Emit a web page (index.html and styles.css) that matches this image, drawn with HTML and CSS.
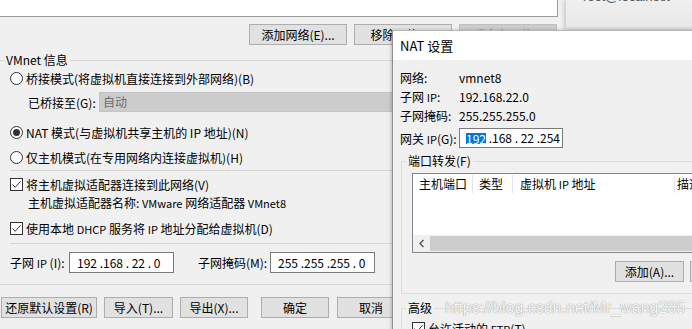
FILE: index.html
```html
<!DOCTYPE html>
<html>
<head>
<meta charset="utf-8">
<link rel="stylesheet" href="styles.css">
</head>
<body>
<div class="screen">
  <div class="main">
    <div class="netlist"></div>
    <div class="netbtns">
      <div class="btn w98">添加网络(E)...</div>
      <div class="btn w98">移除网络(O)</div>
      <div class="btn w98 disabled">重命名网络...</div>
    </div>
    <div class="ghead"><span class="gline lead"></span><span class="glabel">VMnet 信息</span><span class="gline fill"></span></div>
    <div class="row"><span class="radio"></span><span>桥接模式(将虚拟机直接连接到外部网络)(B)</span></div>
    <div class="bridge"><span class="blabel">已桥接至(G):</span><div class="combo">自动</div></div>
    <div class="row r2"><span class="radio on"></span><span>NAT 模式(与虚拟机共享主机的 IP 地址)(N)</span></div>
    <div class="row r3"><span class="radio"></span><span>仅主机模式(在专用网络内连接虚拟机)(H)</span></div>
    <div class="sep s1"></div>
    <div class="row c1"><span class="check"><svg width="11" height="11" viewBox="0 0 11 11"><path d="M1.5 5.5 L4.2 8.3 L9.6 2.2" fill="none" stroke="#333" stroke-width="1"/></svg></span><span>将主机虚拟适配器连接到此网络(V)</span></div>
    <div class="adapter">主机虚拟适配器名称: <span class="lat">VMware</span> 网络适配器 <span class="lat">VMnet8</span></div>
    <div class="row c2"><span class="check"><svg width="11" height="11" viewBox="0 0 11 11"><path d="M1.5 5.5 L4.2 8.3 L9.6 2.2" fill="none" stroke="#333" stroke-width="1"/></svg></span><span>使用本地 <span class="lat">DHCP</span> 服务将 <span class="lat">IP</span> 地址分配给虚拟机(D)</span></div>
    <div class="sep s2"></div>
    <div class="subnet">
      <span class="sl1">子网 <span class="lat">IP</span> (I):</span>
      <div class="ip ipw">192 .168 . 22 . 0</div>
      <span class="sl2">子网掩码(M):</span>
      <div class="ip ipw">255 .255 .255 . 0</div>
    </div>
    <div class="sep s3"></div>
    <div class="actions">
      <div class="btn a1">还原默认设置(R)</div>
      <div class="btn a2">导入(T)...</div>
      <div class="btn a3">导出(X)...</div>
      <div class="btn a4">确定</div>
      <div class="btn a5">取消</div>
    </div>
  </div>

  <div class="bgwin"><span class="bgtext">root@localhost</span></div>

  <div class="nat">
    <div class="titlebar">NAT 设置</div>
    <div class="natbody">
      <div class="kv"><span class="k">网络:</span><span>vmnet8</span></div>
      <div class="kv"><span class="k">子网 <span class="lat">IP</span>:</span><span>192.168.22.0</span></div>
      <div class="kv"><span class="k">子网掩码:</span><span>255.255.255.0</span></div>
      <div class="kv gw"><span class="k">网关 <span class="lat">IP</span>(G):</span><div class="ip gwip"><span class="sel">192</span> .168 . 22 .254</div></div>
      <fieldset class="fs pf">
        <legend>端口转发(F)</legend>
        <div class="pfin">
          <div class="listview">
            <div class="lvhead">
              <span class="col cw1">主机端口</span>
              <span class="col cw2">类型</span>
              <span class="col cw3">虚拟机 <span class="lat">IP</span> 地址</span>
              <span class="col cw4">描述</span>
            </div>
            <div class="lvbody"></div>
            <div class="hscroll">
              <span class="sarrow"><svg width="8" height="9" viewBox="0 0 8 9"><path d="M5.5 1 L2 4.5 L5.5 8" fill="none" stroke="#555" stroke-width="1.4"/></svg></span>
              <span class="thumb"></span>
            </div>
          </div>
          <div class="pfbtns">
            <div class="btn b69">添加(A)...</div>
            <div class="btn b69">移除(R)</div>
          </div>
        </div>
      </fieldset>
      <fieldset class="fs adv">
        <legend>高级</legend>
        <div class="advin">
          <div class="row ftp"><span class="check"><svg width="11" height="11" viewBox="0 0 11 11"><path d="M1.5 5.5 L4.2 8.3 L9.6 2.2" fill="none" stroke="#333" stroke-width="1"/></svg></span><span>允许活动的 <span class="lat">FTP</span>(T)</span></div>
        </div>
      </fieldset>
    </div>
  </div>

  <div class="watermark">https://blog.csdn.net/Mr_wang285</div>
</div>
</body>
</html>
```

FILE: styles.css
```css
* { box-sizing: border-box; }
html, body { margin: 0; padding: 0; }
body {
  width: 692px;
  height: 329px;
  overflow: hidden;
  background: #f0f0f0;
  font-family: "Noto Sans CJK SC", "Noto Sans", sans-serif;
  font-size: 12px;
  color: #000;
}
.screen { position: relative; width: 692px; height: 329px; overflow: hidden; }
.main { width: 567px; }
.lat { font-size: 11px; }

.netlist {
  height: 17px;
  width: 558px;
  background: #fff;
  border-right: 1px solid #9a9a9a;
  border-bottom: 1px solid #9a9a9a;
}

.btn {
  height: 21px;
  border: 1px solid #adadad;
  background: #e1e1e1;
  display: flex;
  align-items: center;
  justify-content: center;
  line-height: 12px;
  white-space: nowrap;
  flex: none;
}
.btn.disabled { background: #cccccc; border-color: #bfbfbf; color: #838383; }

.netbtns { display: flex; gap: 7px; margin-top: 7px; padding-left: 249px; }
.w98 { width: 98px; }

.ghead { display: flex; align-items: center; height: 16px; margin-top: 7px; }
.gline { height: 1px; background: #d5d5d5; }
.gline.lead { width: 4px; }
.gline.fill { flex: 1; }
.glabel { padding: 0 2px; line-height: 16px; }

.row { display: flex; align-items: center; gap: 3px; height: 20px; padding-left: 10px; }
.radio {
  width: 13px; height: 13px; flex: none;
  border: 1px solid #333; border-radius: 50%; background: #fff;
  display: flex; align-items: center; justify-content: center;
}
.radio.on::after { content: ""; width: 7px; height: 7px; border-radius: 50%; background: #333; }
.check {
  width: 13px; height: 13px; flex: none;
  border: 1px solid #333; background: #fff;
  display: flex; align-items: center; justify-content: center;
}
.check svg { display: block; }

.bridge { display: flex; align-items: center; height: 20px; margin-top: 4px; padding-left: 28px; }
.blabel { width: 71px; flex: none; }
.combo {
  width: 458px; height: 20px; background: #cccccc; border: 1px solid #c4c4c4;
  color: #6d6d6d; padding-left: 3px; line-height: 18px;
}
.r2 { margin-top: 10px; }
.r3 { margin-top: 5px; }
.sep { height: 1px; background: #d5d5d5; }
.s1 { margin: 3px 0 0 10px; }
.c1 { margin-top: 3px; }
.adapter { height: 18px; line-height: 18px; padding-left: 28px; }
.c2 { margin-top: 6px; }
.s2 { margin: 5px 0 0 10px; }

.subnet { display: flex; align-items: center; height: 21px; margin-top: 8px; padding-left: 10px; }
.sl1 { width: 59px; flex: none; }
.sl2 { width: 72px; flex: none; margin-left: 24px; }
.ip {
  height: 21px; border: 1px solid #7a7a7a; background: #fff;
  white-space: pre; display: flex; align-items: center; line-height: 14px;
}
.ipw { width: 105px; padding-left: 7px; }
.s3 { margin-top: 11px; }

.actions { display: flex; margin-top: 12px; padding-left: 1px; }
.a1 { width: 96px; }
.a2 { width: 69px; margin-left: 7px; }
.a3 { width: 68px; margin-left: 7px; }
.a4 { width: 68px; margin-left: 13px; }
.a5 { width: 68px; margin-left: 8px; }

.bgwin {
  position: absolute; left: 566px; top: 0; width: 126px; height: 30px;
  background: linear-gradient(to bottom, #efefef, #e9e9e9 85%, #d6d6d6);
  box-shadow: -2px 0 4px rgba(0,0,0,0.16);
  padding-left: 17px;
  overflow: hidden;
}
.bgtext {
  display: block; margin-top: -10px; line-height: 13px;
  font-family: "Liberation Sans", sans-serif; font-size: 13px; color: #555;
}

.nat {
  position: absolute; left: 392px; top: 30px; width: 330px; height: 310px;
  background: #f0f0f0;
  border-left: 1px solid #8f8f8f;
  border-top: 1px solid #b8b8b8;
  box-shadow: -1px 0 3px rgba(0,0,0,0.22);
}
.titlebar { height: 29px; background: #fff; padding-left: 7px; line-height: 29px; font-size: 13px; }
.natbody { padding: 8px 0 0 7px; }
.kv { display: flex; align-items: center; height: 19px; }
.k { width: 59px; flex: none; }
.gw { margin-top: 3px; height: 20px; }
.gwip { width: 104px; height: 20px; padding-left: 6px; }
.sel {
  display: inline-block; background: #0078d7; color: #fff;
  height: 11px; line-height: 11px;
}

.fs { margin: 5px 0 0 1px; padding: 0; border: 1px solid #dcdcdc; min-width: 0; }
.fs legend { margin-left: 4px; padding: 0 2px; line-height: 16px; height: 16px; }
.pfin { padding: 4px 0 11px 10px; }
.listview { width: 300px; border: 1px solid #828790; background: #fff; }
.lvhead { display: flex; align-items: center; height: 20px; }
.col { height: 18px; line-height: 18px; padding-left: 6px; border-right: 1px solid #e5e5e5; white-space: nowrap; overflow: hidden; flex: none; }
.cw1 { width: 60px; }
.cw2 { width: 40px; }
.cw3 { width: 162px; padding-left: 7px; }
.cw4 { width: 36px; padding-left: 2px; border-right: 0; }
.lvbody { height: 41px; }
.hscroll { display: flex; height: 17px; background: #f0f0f0; }
.sarrow { width: 17px; height: 17px; display: flex; align-items: center; justify-content: center; flex: none; }
.thumb { flex: 1; margin: 1px 0; background: #cdcdcd; }
.pfbtns { display: flex; gap: 6px; margin-top: 8px; padding-left: 203px; }
.b69 { width: 69px; }
.adv { margin-top: 6px; }
.advin { padding: 2px 0 0 10px; }
.ftp { padding-left: 0; }

.watermark {
  position: absolute; left: 445px; top: 299px;
  font-family: "Liberation Sans", sans-serif; font-size: 16px; line-height: 18px;
  color: #f6f6f6;
  text-shadow: 0 0 1px #9c9c9c, 0 0 1px #b0b0b0;
  white-space: nowrap;
}
```
